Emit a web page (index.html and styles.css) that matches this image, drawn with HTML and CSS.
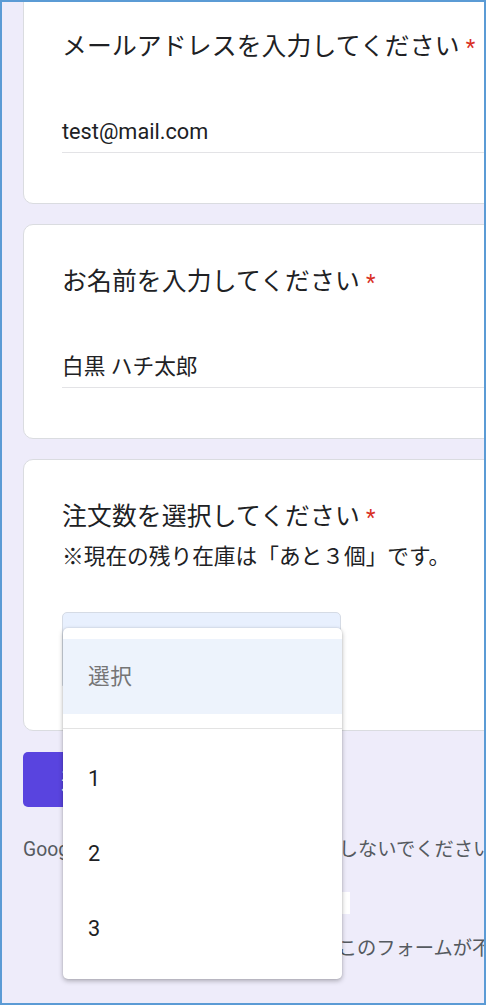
FILE: index.html
```html
<!DOCTYPE html>
<html lang="ja">
<head>
  <meta charset="UTF-8">
  <meta name="viewport" content="width=device-width, initial-scale=1.0">
  <title>注文フォーム</title>
  <link rel="stylesheet" href="styles.css">
</head>
<body>
  <div class="frame">
    <main class="form">
      <section class="card">
        <div class="q-title">メールアドレスを入力してください<span class="req">*</span></div>
        <div class="answer">test@mail.com</div>
      </section>

      <section class="card">
        <div class="q-title">お名前を入力してください<span class="req">*</span></div>
        <div class="answer">白黒 ハチ太郎</div>
      </section>

      <section class="card card-select">
        <div class="q-title">注文数を選択してください<span class="req">*</span></div>
        <div class="desc">※現在の残り在庫は「あと３個」です。</div>
        <div class="select-wrap">
          <div class="select"></div>
          <ul class="menu">
            <li class="opt placeholder">選択</li>
            <li class="sep"></li>
            <li class="opt">1</li>
            <li class="opt">2</li>
            <li class="opt">3</li>
          </ul>
        </div>
      </section>

      <button class="submit">送信</button>
      <p class="note">Google フォームでパスワードを送信しないでください。</p>
      <div class="patch"></div>
      <p class="note note-2">このコンテンツは不明です。このフォームが不審な場合は報告してください</p>
    </main>
  </div>
</body>
</html>
```

FILE: styles.css
```css
body { margin: 0; font-family: Roboto, "Noto Sans CJK JP", sans-serif; color: #202124; }
.frame { height: 1005px; box-sizing: border-box; border: 2px solid #5b9bd5; background: #eeecfa; overflow: hidden; }
.form { padding-left: 21px; }

.card { width: 520px; box-sizing: border-box; background: #fff; border: 1px solid #dadce0; border-radius: 10px; padding: 38px 0 50px 38px; margin-bottom: 20px; }
.card:first-child { margin-top: -13px; }
.q-title { font-size: 24.8px; line-height: 37px; letter-spacing: 0.15px; }
.req { color: #d93025; margin-left: 6px; font-size: 22px; }
.answer { margin-top: 50px; font-size: 21.7px; line-height: 31px; padding-bottom: 5px; border-bottom: 1px solid #e3e3e6; }
.desc { margin-top: 5px; font-size: 21.7px; line-height: 31px; }

.card-select { padding-bottom: 44px; }
.select-wrap { position: relative; margin-top: 40px; width: 279px; }
.select { height: 74px; box-sizing: border-box; background: #e8f0fe; border: 1px solid #d5dbe5; border-radius: 5px 5px 0 0; }
.menu { position: absolute; top: 16px; left: 1px; width: 279px; margin: 0; padding: 11px 0 13px; list-style: none; background: #fff; border-radius: 5px; box-shadow: 0 2px 5px rgba(0,0,0,0.28), 0 0 2px rgba(0,0,0,0.12); z-index: 5; }
.opt { height: 75px; line-height: 75px; padding-left: 25px; font-size: 21.7px; }
.opt.placeholder { background: #edf3fc; color: #757575; letter-spacing: 0.5px; }
.sep { margin: 14px 0 12px; border-top: 1px solid #e3e3e3; }

.submit { display: block; margin-top: 21px; height: 55px; padding: 0 38px; border: none; border-radius: 5px; background: #5944df; color: #fff; font-family: inherit; font-size: 21.7px; }
.note { margin: 28px 0 0 0; font-size: 19.3px; line-height: 30px; color: #555a60; white-space: nowrap; }
.patch { margin: 27px 0 0 60px; width: 267px; height: 22px; background: #fff; }
.note-2 { margin: 20px 0 0 66px; }
```
